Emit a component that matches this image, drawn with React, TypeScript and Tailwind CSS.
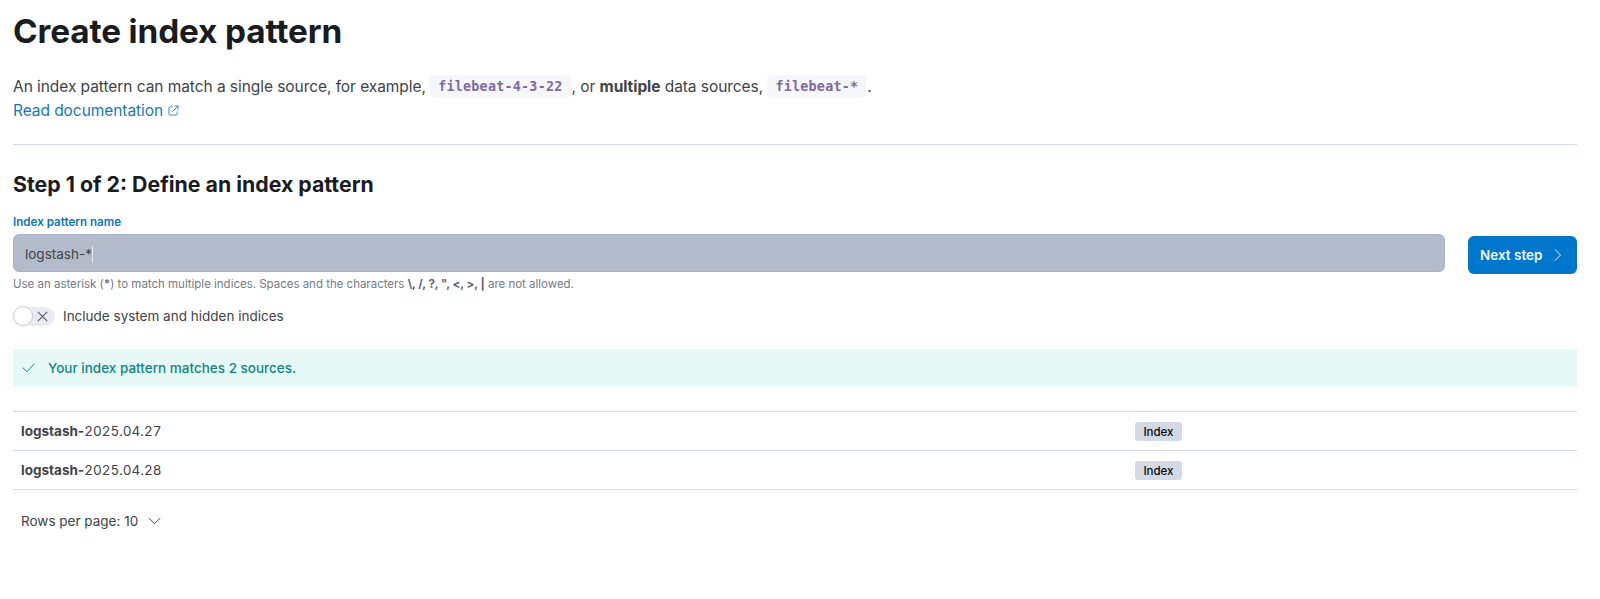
import type { ReactNode } from 'react';

function Code({ children }: { children: ReactNode }) {
  return (
    <code className="relative -top-px mr-px inline-block h-[23px] rounded-[5px] bg-[#f5f7fa] px-[8px] align-middle font-['DejaVu_Sans_Mono',monospace] text-[13.400px] leading-[23px] font-bold tracking-[0.23px] text-[#8069a2]">
      {children}
    </code>
  );
}

function SourceRow({ date }: { date: string }) {
  return (
    <div className="flex h-[39.2px] items-center border-b border-[#d3dae6] px-2 text-[13.5px] leading-5">
      <div className="w-[1113.500px]">
        <strong className="font-bold">logstash-</strong>
        <span className="tabular-nums">{date}</span>
      </div>
      <span className="mt-px h-[19px] w-[47px] rounded-[3px] bg-[#d3dae6] pl-px text-center text-[11.500px] leading-[20px] font-medium text-[#07080a]">
        Index
      </span>
    </div>
  );
}

export default function App() {
  return (
    <main className="h-[599px] w-full bg-white pt-[11px] pr-[23px] pl-[13px] font-['Inter',sans-serif] text-[#404349]">
      <h1 className="h-[64px] text-[33.3px] leading-10 font-bold tracking-[-0.12px] text-[#1a1c21]">Create index pattern</h1>
      <div className="h-[69px] text-[15.5px] leading-[23.500px] tracking-[-0.06px]">
        <p className="h-[23.500px]">
          An index pattern can match a single source, for example, <Code>filebeat-4-3-22</Code>, or{' '}
          <strong className="font-bold">multiple</strong> data sources, <Code>filebeat-*</Code>.
        </p>
        <a className="flex items-center text-[#1677c0]">
          Read documentation
          <svg className="ml-[5px] mt-px size-[11px]" viewBox="0 0 12 12" fill="none" stroke="currentColor" strokeWidth="0.9">
            <path d="M5 2H2.3A1.3 1.3 0 0 0 1 3.3v6.4A1.3 1.3 0 0 0 2.3 11h6.4A1.3 1.3 0 0 0 10 9.700V7M7 1h4v4M11 1 4.500 7.500" />
          </svg>
        </a>
      </div>
      <hr className="border-[#d3dae6]" />
      <h2 className="mt-[25.500px] h-[43.500px] text-[21.3px] leading-[26px] font-bold text-[#1a1c21]">Step 1 of 2: Define an index pattern</h2>
      <div className="flex h-[78px] justify-between">
        <div className="w-[1432px]">
          <label className="block h-[20px] text-[11.600px] leading-4 font-semibold text-[#0f75bd]">Index pattern name</label>
          <div className="flex h-[38px] items-center rounded-[6px] border border-[#a9b3c8] bg-[#b4bbca] px-[11px] pt-[2px] text-[13.5px]">
            logstash-*
            <span className="h-[17px] w-px bg-[#e5e9f1]" />
          </div>
          <p className="mt-[4px] text-[11.500px] leading-4 tracking-[-0.015px] text-[#757b87]">
            Use an asterisk (<strong>*</strong>) to match multiple indices. Spaces and the characters{' '}
            <strong className="text-[#5b606c]">\, /, ?, ", &lt;, &gt;, |</strong> are not allowed.
          </p>
        </div>
        <button className="mt-[21.500px] flex h-[38.500px] w-[109px] items-center rounded-[6px] bg-[#0077cc] pl-[12px] text-[13.5px] font-semibold text-[#f0f8ff]">
          Next step
          <svg className="ml-[12px] h-[14px] w-[8px]" viewBox="0 0 8 14" fill="none" stroke="currentColor" strokeWidth="1">
            <path d="m1 1.500 5.500 5.500L1 12.500" />
          </svg>
        </button>
      </div>
      <div className="mt-[14px] flex h-[20px] items-center text-[13.5px]">
        <span className="flex h-[19px] w-[42px] items-center justify-between rounded-full bg-[#e9ebf0] pr-[7px]">
          <span className="size-[19.500px] rounded-full border border-[#c9cbd0] bg-white" />
          <svg className="size-[11px]" viewBox="0 0 11 11" fill="none" stroke="#5b5f69" strokeWidth="1.200">
            <path d="m.8.8 9.400 9.400M10.200.8.8 10.200" />
          </svg>
        </span>
        <span className="ml-[8px]">Include system and hidden indices</span>
      </div>
      <div className="mt-[23px] flex h-[38px] items-center bg-[#e6f9f7] pl-[9px] text-[13.5px] font-medium text-[#15857d]">
        <svg className="mr-[13px] h-[10px] w-[13px]" viewBox="0 0 13 10" fill="none" stroke="currentColor">
          <path d="m.7 4.600 4.300 4.200L12.300.8" />
        </svg>
        Your index pattern matches 2 sources.
      </div>
      <div className="mt-[24px] border-t border-[#d3dae6]">
        <SourceRow date="2025.04.27" />
        <SourceRow date="2025.04.28" />
      </div>
      <div className="mt-[19.500px] flex h-[22px] items-center pl-[8px] text-[13.5px]">
        Rows per page: 10
        <svg className="ml-[10px] h-[8px] w-[13px]" viewBox="0 0 13 8" fill="none" stroke="currentColor">
          <path d="m.8 1 5.700 5.700L12.200 1" />
        </svg>
      </div>
    </main>
  );
}
